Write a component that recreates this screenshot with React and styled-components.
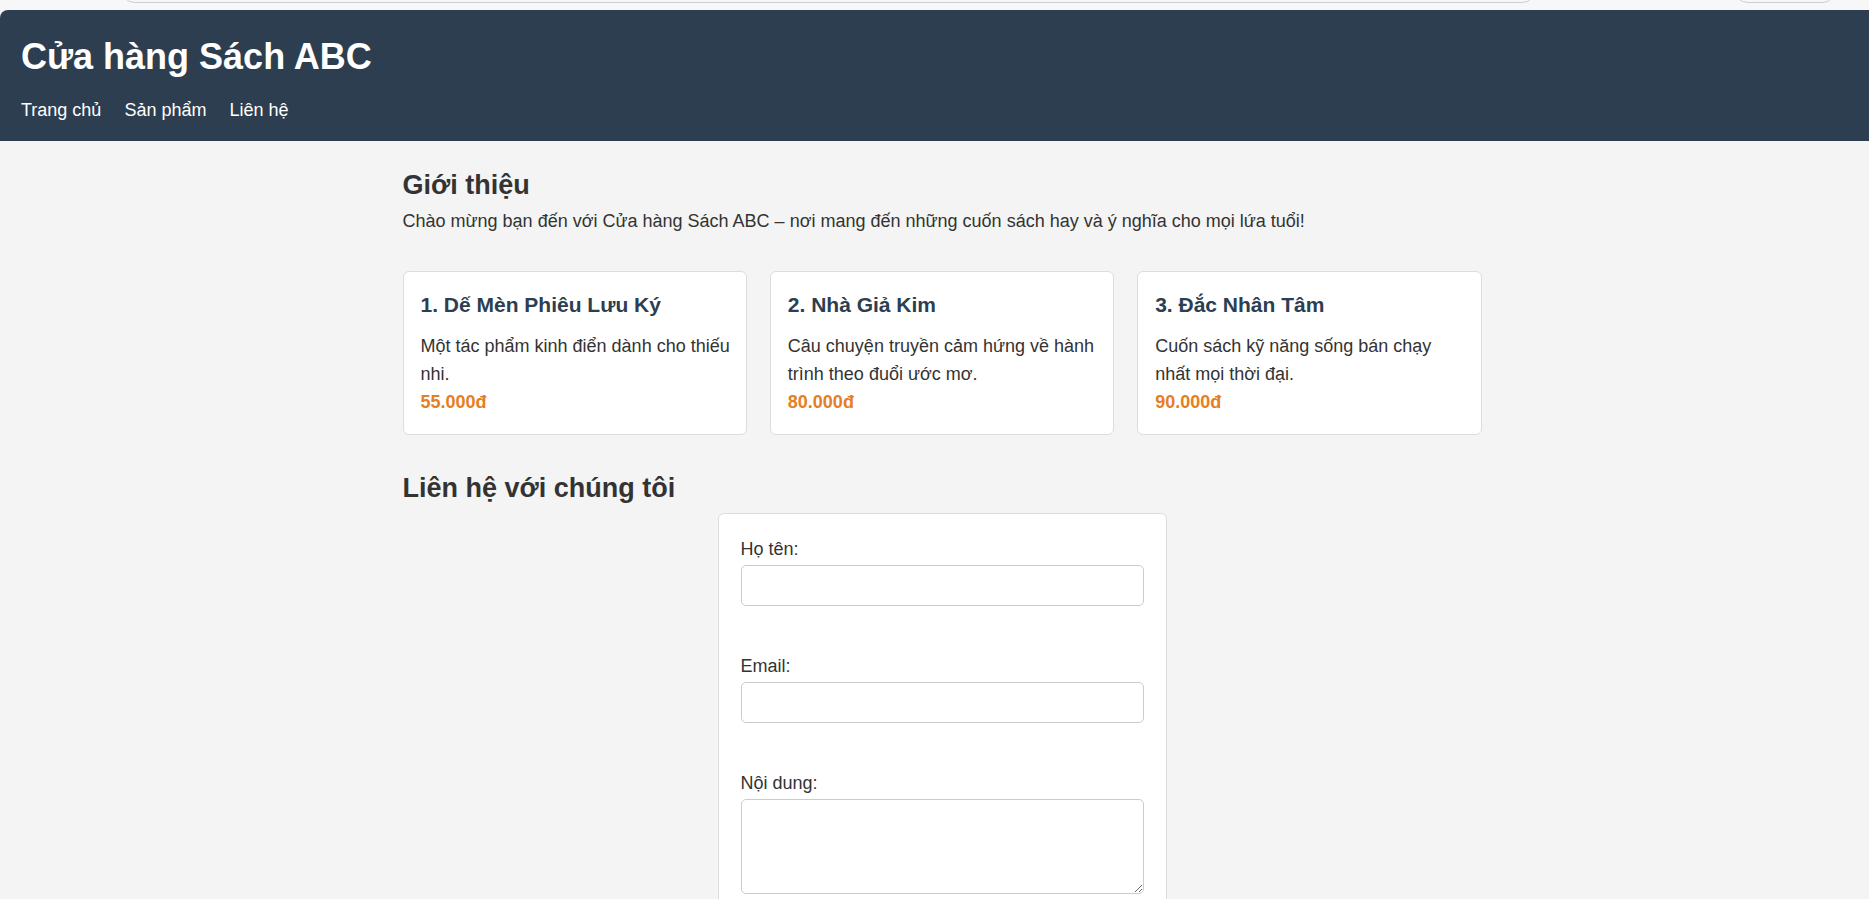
import React from "react";
import styled, { createGlobalStyle } from "styled-components";

const GlobalStyle = createGlobalStyle`
  body {
    margin: 0;
    background-color: #f4f4f4;
    font-family: "Liberation Sans", Arial, sans-serif;
    color: #333;
  }
  * {
    box-sizing: border-box;
  }
`;

const BrowserStrip = styled.div`
  height: 10px;
  display: flex;
  align-items: flex-end;
  overflow: hidden;
  background-color: #f7f7f7;
`;

const Pill = styled.div`
  flex-shrink: 0;
  height: 30px;
  margin-bottom: 7px;
  margin-left: ${(props) => props.offset}px;
  width: ${(props) => props.size}px;
  border: 1px solid #cdcdcd;
  border-radius: 15px;
`;

const Header = styled.header`
  background-color: #2c3e50;
  border-top-left-radius: 8px;
  padding: 26px 21px 20px;
  color: white;
`;

const Title = styled.h1`
  margin: 0 0 23px;
  font-size: 36px;
  line-height: 41px;
  font-weight: bold;
`;

const Nav = styled.nav`
  display: flex;
  gap: 23px;
`;

const NavLink = styled.a`
  color: white;
  text-decoration: none;
  font-size: 18px;
  line-height: 21px;
`;

const Main = styled.main`
  width: 1079px;
  margin-left: calc(50% - 532px);
  padding-top: 29px;
`;

const SectionTitle = styled.h2`
  margin: 0;
  font-size: 27px;
  line-height: 31px;
  font-weight: bold;
  color: #333;
`;

const Intro = styled.p`
  margin: 6px 0 0;
  font-size: 18px;
  line-height: 28px;
`;

const Books = styled.div`
  display: grid;
  grid-template-columns: repeat(3, 1fr);
  gap: 23px;
  margin: 36px 0 38px;
`;

const Card = styled.div`
  background-color: white;
  border: 1px solid #ddd;
  border-radius: 6px;
  padding: 19px 14px 18px 17px;
`;

const BookTitle = styled.h3`
  margin: 0 0 13px;
  font-size: 21px;
  line-height: 28px;
  color: #2c3e50;
`;

const BookText = styled.p`
  margin: 0;
  font-size: 18px;
  line-height: 28px;
  color: ${(props) => (props.price ? "#e67e22" : "#333")};
  font-weight: ${(props) => (props.price ? "bold" : "normal")};
`;

const Form = styled.form`
  width: 449px;
  margin: 9px auto 0;
  background-color: white;
  border: 1px solid #ddd;
  border-radius: 6px;
  padding: 25px 22px 22px;
`;

const Field = styled.div`
  display: flex;
  flex-direction: column;
  margin-bottom: 50px;
`;

const Label = styled.label`
  font-size: 18px;
  line-height: 21px;
  margin-bottom: 5px;
  color: #333;
`;

const Input = styled.input`
  height: 41px;
  border: 1px solid #ccc;
  border-radius: 5px;
  padding: 9px;
  font-size: 18px;
  font-family: inherit;
`;

const TextArea = styled.textarea`
  height: 95px;
  border: 1px solid #ccc;
  border-radius: 5px;
  padding: 9px;
  font-size: 18px;
  font-family: inherit;
`;

const books = [
  { title: "1. Dế Mèn Phiêu Lưu Ký", text: "Một tác phẩm kinh điển dành cho thiếu nhi.", price: "55.000đ" },
  { title: "2. Nhà Giả Kim", text: "Câu chuyện truyền cảm hứng về hành trình theo đuổi ước mơ.", price: "80.000đ" },
  { title: "3. Đắc Nhân Tâm", text: "Cuốn sách kỹ năng sống bán chạy nhất mọi thời đại.", price: "90.000đ" },
];

const App = () => {
  return (
    <>
      <GlobalStyle />
      <BrowserStrip>
        <Pill offset={120} size={1417} />
        <Pill offset={196} size={104} />
      </BrowserStrip>
      <Header>
        <Title>Cửa hàng Sách ABC</Title>
        <Nav>
          <NavLink href="#">Trang chủ</NavLink>
          <NavLink href="#">Sản phẩm</NavLink>
          <NavLink href="#">Liên hệ</NavLink>
        </Nav>
      </Header>
      <Main>
        <SectionTitle>Giới thiệu</SectionTitle>
        <Intro>
          Chào mừng bạn đến với Cửa hàng Sách ABC – nơi mang đến những cuốn sách hay và ý nghĩa cho mọi lứa tuổi!
        </Intro>
        <Books>
          {books.map((b) => (
            <Card key={b.title}>
              <BookTitle>{b.title}</BookTitle>
              <BookText>{b.text}</BookText>
              <BookText price>{b.price}</BookText>
            </Card>
          ))}
        </Books>
        <SectionTitle>Liên hệ với chúng tôi</SectionTitle>
        <Form onSubmit={(e) => e.preventDefault()}>
          <Field>
            <Label htmlFor="name">Họ tên:</Label>
            <Input id="name" type="text" />
          </Field>
          <Field>
            <Label htmlFor="email">Email:</Label>
            <Input id="email" type="email" />
          </Field>
          <Field>
            <Label htmlFor="message">Nội dung:</Label>
            <TextArea id="message" />
          </Field>
        </Form>
      </Main>
    </>
  );
};

export default App;
